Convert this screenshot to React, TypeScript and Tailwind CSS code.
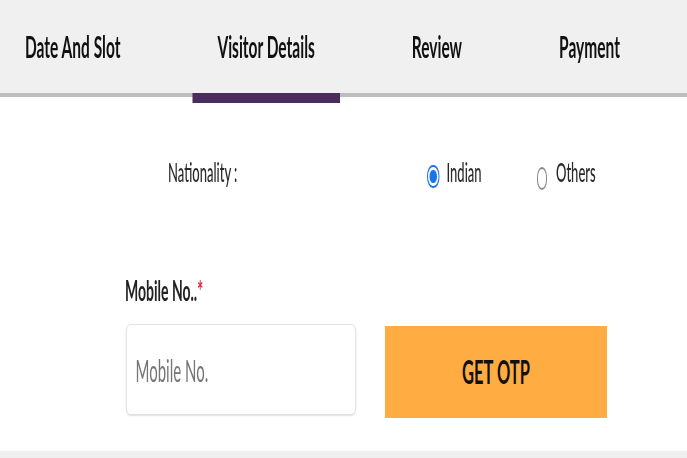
const tabs = ["Date And Slot", "Visitor Details", "Review", "Payment"];

export default function App() {
  const active = 1;

  return (
    <div className="w-[687px] h-[458px] overflow-hidden bg-white">
      {/* the shot is squeezed sideways, so lay out wide and scale x down */}
      <div className="w-[1374px] h-[458px] origin-top-left scale-x-[0.5] flex flex-col font-['Lato',sans-serif]">
        <div className="h-[93px] bg-[#f0f0f0] flex items-stretch gap-[94px]">
          {tabs.map((tab, index) => (
            <div
              key={tab}
              className="relative flex items-center px-[50px] text-[31px] font-bold text-[#111]"
            >
              {tab}
              {index === active && (
                <span className="absolute left-0 right-0 top-full h-[10px] bg-[#4a2d5e] z-10" />
              )}
            </div>
          ))}
        </div>
        <div className="h-[4px] bg-[#bdbdbd]" />

        <div className="mt-[55px] h-[40px] flex items-center pl-[336px] text-[26px] font-medium text-[#2a2a2a]">
          <span className="w-[518px]">Nationality :</span>
          <label className="w-[220px] flex items-center gap-[14px]">
            <span className="mt-[8px] w-[25px] h-[23px] rounded-full border-2 border-[#1a73e8] p-[3px]">
              <span className="block w-full h-full rounded-full bg-[#1a73e8]" />
            </span>
            Indian
          </label>
          <label className="flex items-center gap-[18px]">
            <span className="mt-[12px] w-[20px] h-[23px] rounded-full border-2 border-[#8a8a8a]" />
            Others
          </label>
        </div>

        <div className="mt-[84px] pl-[250px] text-[28px] font-bold text-[#222] leading-none">
          Mobile No..<span className="text-[#e0243a]">*</span>
        </div>

        <div className="mt-[20px] pl-[252px] flex items-start gap-[58px]">
          <input
            placeholder="Mobile No."
            className="w-[460px] h-[91px] rounded-[8px] border border-[#d6d6d6] shadow-[0_1px_2px_rgba(0,0,0,0.12)] px-[18px] text-[30px] text-[#333] placeholder:text-[#757575] outline-none"
          />
          <button className="mt-[2px] w-[444px] h-[92px] bg-[#ffad42] text-[33px] font-bold text-[#111]">
            GET OTP
          </button>
        </div>

        <div className="mt-auto h-[7px] bg-[#efefef]" />
      </div>
    </div>
  );
}
